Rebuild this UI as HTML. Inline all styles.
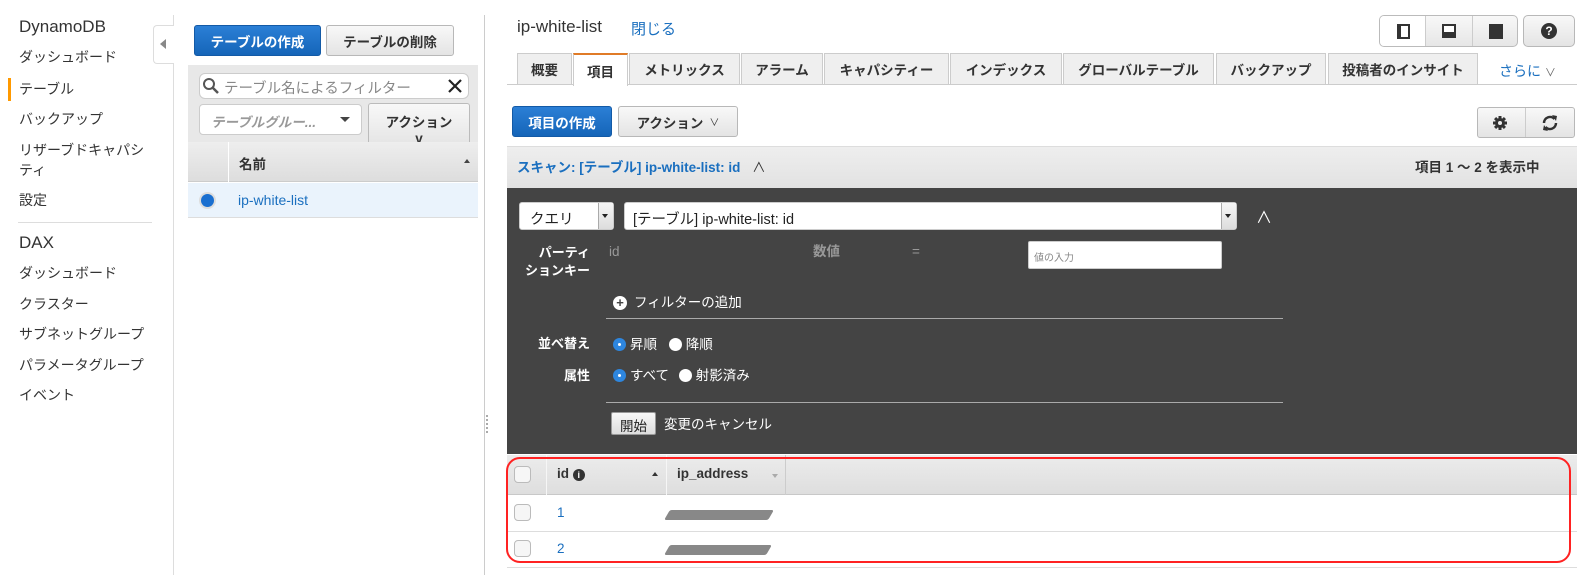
<!DOCTYPE html>
<html><head><meta charset="utf-8">
<style>
*{box-sizing:border-box;margin:0;padding:0}
body{width:1590px;height:575px;background:#fff;font-family:"Liberation Sans","Noto Sans CJK JP",sans-serif;font-size:14px;color:#222;position:relative;overflow:hidden}
.a{position:absolute}
.nav{font-size:14px;color:#333}
.btn{position:absolute;border:1px solid #b8b8b8;border-radius:3px;background:linear-gradient(#f8f8f8,#e4e4e4);font-weight:bold;font-size:13.5px;color:#333;display:flex;align-items:center;justify-content:center}
.pri{background:linear-gradient(#2b7fd6,#1565b8);border-color:#135aa6;color:#fff}
.tab{position:absolute;top:53px;height:31px;border:1px solid #ccc;border-bottom:none;background:#efefef;font-weight:bold;font-size:13.5px;color:#333;display:flex;align-items:center;justify-content:center}
.lbl{position:absolute;color:#fff;font-weight:bold;font-size:13px;text-align:right}
.rad{display:inline-block;width:13px;height:13px;border-radius:50%;background:#fff;vertical-align:-2px;margin-right:4px}
.radon{background:#2e86de;position:relative}
.radon:after{content:"";position:absolute;left:5px;top:5px;width:3px;height:3px;background:#fff;border-radius:50%}
.cb{position:absolute;left:514px;width:17px;height:17px;border:1px solid #bbb;border-radius:4px;background:#f6f6f6}
</style></head><body>
<!-- left nav -->
<div class="a nav" style="left:19px;top:17px;font-size:17px;color:#333">DynamoDB</div>
<div class="a nav" style="left:19px;top:47px">ダッシュボード</div>
<div class="a" style="left:8px;top:78px;width:3px;height:23px;background:#f90"></div>
<div class="a nav" style="left:19px;top:79px">テーブル</div>
<div class="a nav" style="left:19px;top:109px">バックアップ</div>
<div class="a nav" style="left:19px;top:140px;line-height:20px">リザーブドキャパシ<br>ティ</div>
<div class="a nav" style="left:19px;top:190px">設定</div>
<div class="a" style="left:18px;top:222px;width:134px;height:1px;background:#ddd"></div>
<div class="a nav" style="left:19px;top:233px;font-size:17px">DAX</div>
<div class="a nav" style="left:19px;top:263px">ダッシュボード</div>
<div class="a nav" style="left:19px;top:294px">クラスター</div>
<div class="a nav" style="left:19px;top:324px">サブネットグループ</div>
<div class="a nav" style="left:19px;top:355px">パラメータグループ</div>
<div class="a nav" style="left:19px;top:385px">イベント</div>
<div class="a" style="left:173px;top:15px;width:1px;height:560px;background:#ddd"></div>
<div class="a" style="left:153px;top:25px;width:21px;height:39px;border:1px solid #ddd;border-right:none;border-radius:4px 0 0 4px;background:#fff"></div>
<div class="a" style="left:160px;top:39px;width:0;height:0;border-top:5px solid transparent;border-bottom:5px solid transparent;border-right:6px solid #888"></div>
<!-- middle -->
<div class="btn pri" style="left:194px;top:25px;width:127px;height:31px">テーブルの作成</div>
<div class="btn" style="left:326px;top:25px;width:128px;height:31px">テーブルの削除</div>
<div class="a" style="left:188px;top:65px;width:290px;height:77px;background:#e8e8e8"></div>
<div class="a" style="left:199px;top:73px;width:270px;height:26px;background:#fff;border:1px solid #ccc;border-radius:6px;color:#888;font-size:14.5px;padding:3px 0 0 24px">テーブル名によるフィルター</div>
<svg class="a" style="left:202px;top:77px" width="18" height="18"><circle cx="7" cy="7" r="5" fill="none" stroke="#555" stroke-width="2"/><path d="M11 11l5 5" stroke="#555" stroke-width="2.5"/></svg>
<svg class="a" style="left:447px;top:78px" width="16" height="16"><path d="M2 2l12 12M14 2L2 14" stroke="#222" stroke-width="2.2"/></svg>
<div class="a" style="left:199px;top:104px;width:163px;height:31px;background:#fff;border:1px solid #ccc;border-radius:4px;color:#999;font-style:italic;font-weight:bold;font-size:13.5px;padding:6px 0 0 11px">テーブルグルー...</div>
<div class="a" style="left:340px;top:117px;border-left:5px solid transparent;border-right:5px solid transparent;border-top:5px solid #444"></div>
<div class="a" style="left:368px;top:103px;width:102px;height:39px;background:linear-gradient(#f8f8f8,#e6e6e6);border:1px solid #bbb;border-bottom:none;border-radius:3px 3px 0 0;font-weight:bold;font-size:13.5px;color:#333;text-align:center;padding-top:7px;overflow:hidden">アクション<br>v</div>
<div class="a" style="left:188px;top:142px;width:290px;height:40px;background:linear-gradient(#eee,#ddd);border-bottom:1px solid #ccc"></div>
<div class="a" style="left:228px;top:142px;width:1px;height:40px;background:#fff"></div>
<div class="a" style="left:239px;top:153px;font-weight:bold;font-size:13.5px;color:#333">名前</div>
<div class="a" style="left:464px;top:159px;border-left:3px solid transparent;border-right:3px solid transparent;border-bottom:4px solid #444"></div>
<div class="a" style="left:188px;top:183px;width:290px;height:35px;background:#eaf3fc;border-bottom:1px solid #ddd"></div>
<div class="a" style="left:199px;top:192px;width:17px;height:17px;border-radius:50%;background:#ddd"></div>
<div class="a" style="left:201px;top:194px;width:13px;height:13px;border-radius:50%;background:#1a6fd0"></div>
<div class="a" style="left:238px;top:192px;color:#1a6fbf;font-size:14px">ip-white-list</div>
<div class="a" style="left:484px;top:15px;width:1px;height:560px;background:#ccc"></div>
<div class="a" style="left:486px;top:415px;width:2px;height:18px;border-left:2px dotted #aaa"></div>
<!-- right header -->
<div class="a" style="left:517px;top:17px;font-size:17px;color:#333">ip-white-list</div>
<div class="a" style="left:631px;top:18px;font-size:15px;color:#1a6fbf">閉じる</div>
<div class="a" style="left:1379px;top:15px;width:139px;height:32px;border:1px solid #bbb;border-radius:5px;background:linear-gradient(#f8f8f8,#e6e6e6);overflow:hidden">
 <div class="a" style="left:0;top:0;width:46px;height:30px;background:#fff;border-right:1px solid #ccc"></div>
 <div class="a" style="left:92px;top:0;width:1px;height:30px;background:#ccc"></div>
 <div class="a" style="left:17px;top:8px;width:13px;height:15px;border:2px solid #333;border-left-width:4px;background:#fff"></div>
 <div class="a" style="left:62px;top:8px;width:14px;height:14px;border:2px solid #333;border-bottom-width:6px;background:#fff"></div>
 <div class="a" style="left:109px;top:8px;width:14px;height:15px;background:#333"></div>
</div>
<div class="btn" style="left:1523px;top:15px;width:52px;height:32px;border-radius:5px"><span style="display:inline-block;width:16px;height:16px;border-radius:50%;background:#333;color:#fff;font-size:12px;line-height:16px;text-align:center">?</span></div>
<!-- tabs -->
<div class="a" style="left:507px;top:84px;width:1070px;height:1px;background:#ccc"></div>
<div class="tab" style="left:517px;width:55px">概要</div>
<div class="tab" style="left:573px;width:55px;background:#fff;border-top:2px solid #e07b27;height:33px">項目</div>
<div class="tab" style="left:629px;width:111px">メトリックス</div>
<div class="tab" style="left:741px;width:82px">アラーム</div>
<div class="tab" style="left:824px;width:125px">キャパシティー</div>
<div class="tab" style="left:950px;width:112px">インデックス</div>
<div class="tab" style="left:1063px;width:151px">グローバルテーブル</div>
<div class="tab" style="left:1216px;width:110px">バックアップ</div>
<div class="tab" style="left:1328px;width:150px">投稿者のインサイト</div>
<div class="a" style="left:1499px;top:61px;color:#1a6fbf;font-size:14px">さらに <span style="color:#666;font-size:11px">∨</span></div>
<!-- action buttons -->
<div class="btn pri" style="left:512px;top:106px;width:100px;height:31px">項目の作成</div>
<div class="btn" style="left:618px;top:106px;width:120px;height:31px">アクション <span style="font-weight:normal;font-size:10px;margin-left:6px">∨</span></div>
<div class="btn" style="left:1477px;top:107px;width:98px;height:31px;justify-content:flex-start">
 <svg style="margin-left:14px" width="16" height="16" viewBox="0 0 16 16"><g fill="#333"><circle cx="8" cy="8" r="5"/><rect x="6.5" y="1" width="3" height="14"/><rect x="1" y="6.5" width="14" height="3"/><rect x="6.5" y="1" width="3" height="14" transform="rotate(45 8 8)"/><rect x="6.5" y="1" width="3" height="14" transform="rotate(-45 8 8)"/></g><circle cx="8" cy="8" r="2" fill="#eee"/></svg>
 <div style="position:absolute;left:47px;top:0;width:1px;height:29px;background:#ccc"></div>
 <svg style="position:absolute;left:62px;top:6px" width="20" height="18" viewBox="0 0 20 18"><path d="M4 9a6 6 0 0 1 10.5-4" fill="none" stroke="#333" stroke-width="2.5"/><path d="M16 9a6 6 0 0 1-10.5 4" fill="none" stroke="#333" stroke-width="2.5"/><path d="M12 1l5 1-1 5z M8 17l-5-1 1-5z" fill="#333"/></svg>
</div>
<!-- scan header -->
<div class="a" style="left:507px;top:146px;width:1070px;height:42px;background:linear-gradient(#eee,#e2e2e2);border-top:1px solid #ddd"></div>
<div class="a" style="left:517px;top:156px;color:#1a6fbf;font-weight:bold;font-size:13.5px">スキャン: [テーブル] ip-white-list: id <span style="color:#333;font-weight:normal;margin-left:8px">∧</span></div>
<div class="a" style="left:1415px;top:156px;color:#333;font-weight:bold;font-size:13.5px">項目 1 ～ 2 を表示中</div>
<!-- dark panel -->
<div class="a" style="left:507px;top:188px;width:1070px;height:266px;background:#444"></div>
<div class="a" style="left:519px;top:202px;width:95px;height:28px;background:#fff;border:1px solid #ccc;border-radius:3px;padding:5px 0 0 10px;font-size:14.5px">クエリ</div>
<div class="a" style="left:598px;top:203px;width:15px;height:26px;background:linear-gradient(#f6f6f6,#ddd);border-left:1px solid #aaa"></div>
<div class="a" style="left:602px;top:214px;border-left:3px solid transparent;border-right:3px solid transparent;border-top:4px solid #222"></div>
<div class="a" style="left:624px;top:202px;width:613px;height:28px;background:#fff;border:1px solid #ccc;border-radius:3px;padding:5px 0 0 8px;font-size:14.5px">[テーブル] ip-white-list: id</div>
<div class="a" style="left:1221px;top:203px;width:15px;height:26px;background:linear-gradient(#f6f6f6,#ddd);border-left:1px solid #aaa"></div>
<div class="a" style="left:1225px;top:214px;border-left:3px solid transparent;border-right:3px solid transparent;border-top:4px solid #222"></div>
<div class="a" style="left:1256px;top:204px;color:#fff;font-size:16px">∧</div>
<div class="lbl" style="left:500px;width:90px;top:244px;line-height:18px">パーティ<br>ションキー</div>
<div class="a" style="left:609px;top:244px;color:#999;font-size:13.5px">id</div>
<div class="a" style="left:813px;top:244px;color:#999;font-size:13.5px;font-weight:bold;line-height:16px">数値</div>
<div class="a" style="left:912px;top:244px;color:#999;font-size:13.5px">=</div>
<div class="a" style="left:1028px;top:241px;width:194px;height:28px;background:#fff;border:1px solid #ccc;border-radius:2px;color:#888;font-size:10px;padding:7px 0 0 5px">値の入力</div>
<div class="a" style="left:613px;top:296px;width:14px;height:14px;border-radius:50%;background:#fff;color:#444;font-weight:bold;font-size:13px;line-height:14px;text-align:center">+</div>
<div class="a" style="left:634px;top:291px;color:#fff;font-size:13.5px">フィルターの追加</div>
<div class="a" style="left:606px;top:318px;width:677px;height:1px;background:#aaa"></div>
<div class="lbl" style="left:500px;width:90px;top:333px">並べ替え</div>
<div class="a" style="left:613px;top:333px;color:#fff;font-size:13.5px"><span class="rad radon"></span>昇順 <span class="rad" style="margin-left:8px"></span>降順</div>
<div class="lbl" style="left:500px;width:90px;top:365px">属性</div>
<div class="a" style="left:613px;top:364px;color:#fff;font-size:13.5px"><span class="rad radon"></span>すべて <span class="rad" style="margin-left:6px"></span>射影済み</div>
<div class="a" style="left:606px;top:402px;width:677px;height:1px;background:#aaa"></div>
<div class="a" style="left:611px;top:412px;width:45px;height:23px;background:linear-gradient(#f8f8f8,#ddd);border:1px solid #999;border-radius:2px;font-size:13.5px;text-align:center;padding-top:2px">開始</div>
<div class="a" style="left:664px;top:413px;color:#fff;font-size:13.5px">変更のキャンセル</div>
<!-- table -->
<div class="a" style="left:507px;top:455px;width:1070px;height:40px;background:linear-gradient(#ececec,#dedede);border-bottom:1px solid #c8c8c8"></div>
<div class="a" style="left:546px;top:455px;width:1px;height:40px;background:#f6f6f6"></div>
<div class="a" style="left:666px;top:455px;width:1px;height:40px;background:#f6f6f6"></div>
<div class="a" style="left:785px;top:455px;width:1px;height:40px;background:#ccc"></div>
<div class="cb" style="top:466px"></div>
<div class="a" style="left:557px;top:466px;font-weight:bold;font-size:13.5px;color:#333">id <span style="display:inline-block;width:12px;height:12px;border-radius:50%;background:#333;color:#fff;font-size:9px;line-height:12px;text-align:center;vertical-align:0">i</span></div>
<div class="a" style="left:652px;top:472px;border-left:3px solid transparent;border-right:3px solid transparent;border-bottom:4px solid #333"></div>
<div class="a" style="left:677px;top:466px;font-weight:bold;font-size:13.5px;color:#333">ip_address</div>
<div class="a" style="left:772px;top:474px;border-left:3px solid transparent;border-right:3px solid transparent;border-top:4px solid #aaa"></div>
<div class="a" style="left:507px;top:531px;width:1070px;height:1px;background:#ddd"></div>
<div class="a" style="left:507px;top:567px;width:1070px;height:1px;background:#ddd"></div>
<div class="cb" style="top:504px"></div>
<div class="a" style="left:557px;top:505px;color:#1a6fbf;font-size:13.5px">1</div>
<div class="a" style="left:667px;top:510px;width:104px;height:10px;background:#888;transform:skewX(-30deg);border-radius:2px"></div>
<div class="cb" style="top:540px"></div>
<div class="a" style="left:557px;top:541px;color:#1a6fbf;font-size:13.5px">2</div>
<div class="a" style="left:667px;top:545px;width:102px;height:10px;background:#888;transform:skewX(-30deg);border-radius:2px"></div>
<div class="a" style="left:506px;top:457px;width:1065px;height:106px;border:2px solid #f22;border-radius:14px"></div>
</body></html>
